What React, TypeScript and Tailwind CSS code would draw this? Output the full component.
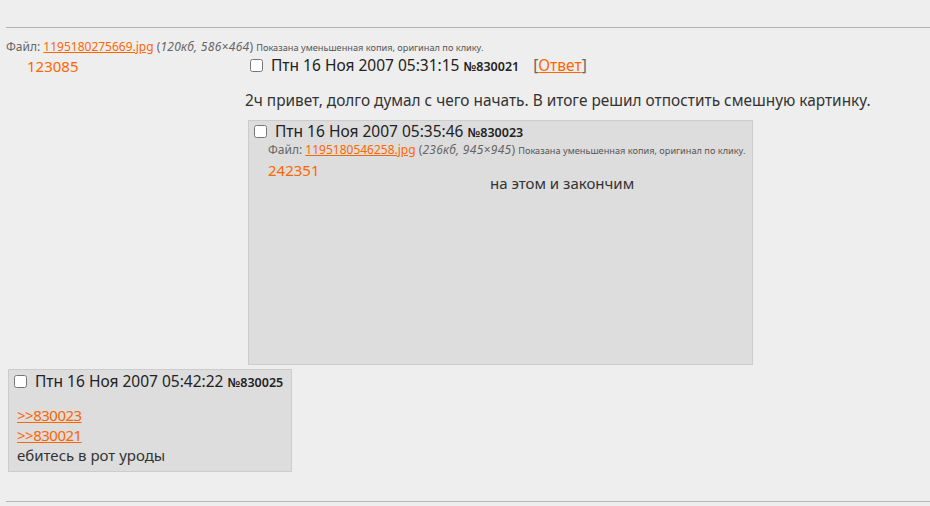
const font = "font-['Trebuchet_MS','Noto_Sans',sans-serif]";

function Box() {
  return <input type="checkbox" className="m-0 h-[13px] w-[13px] shrink-0" />;
}

function FileLine({ name, size, dims }: { name: string; size: string; dims: string }) {
  return (
    <div className="text-[12px] leading-[14px] text-[#666]">
      Файл:{" "}
      <a href="#" className="text-[#ff6600] underline">
        {name}
      </a>{" "}
      (<em className="tracking-[0.3px]">
        {size}, {dims}
      </em>
      ) <span className="text-[9.2px] text-[#555]">Показана уменьшенная копия, оригинал по клику.</span>
    </div>
  );
}

function Header({ date, num, reply }: { date: string; num: string; reply?: boolean }) {
  return (
    <div className="flex h-[18px] items-center gap-[8px] text-[15.5px] leading-[18px] text-[#222]">
      <Box />
      <span className="leading-[18px]">
        {date} <span className="text-[12.5px] leading-none font-semibold">№{num}</span>
      </span>
      {reply && (
        <span className="ml-[6px] text-[#666]">
          [<a href="#" className="text-[#ff6600] underline">Ответ</a>]
        </span>
      )}
    </div>
  );
}

export default function App() {
  return (
    <div className={`min-h-screen bg-[#eeeeee] pt-[27px] ${font}`}>
      <hr className="ml-[6px] border-0 border-t border-[#b4b4b4]" />
      <div className="pl-[6px] pt-[12px]">
        <FileLine name="1195180275669.jpg" size="120кб" dims="586×464" />
        <div className="mt-[1px] flex">
          <div className="w-[241px] shrink-0 pl-[21px] pt-[1px] text-[15px] leading-[18px] text-[#ff6600]">123085</div>
          <div className="flex flex-col">
            <div className="pl-[3px]">
              <Header date="Птн 16 Ноя 2007 05:31:15" num="830021" reply />
            </div>
            <p className="-ml-[2px] mt-[17px] text-[15.4px] leading-[20px] text-[#333]">
              2ч привет, долго думал с чего начать. В итоге решил отпостить смешную картинку.
            </p>
            <div className="ml-[1px] mt-[9px] flex h-[245px] w-[505px] flex-col border border-[#cccccc] bg-[#dddddd] pl-[5px] pt-[1px]">
              <Header date="Птн 16 Ноя 2007 05:35:46" num="830023" />
              <div className="pl-[14px] pt-[3px]">
                <FileLine name="1195180546258.jpg" size="236кб" dims="945×945" />
              </div>
              <div className="flex">
                <div className="w-[236px] shrink-0 pl-[14px] pt-[3px] text-[15px] leading-[18px] text-[#ff6600]">242351</div>
                <p className="pt-[15px] text-[15px] leading-[20px] text-[#333]">на этом и закончим</p>
              </div>
            </div>
          </div>
        </div>
        <div className="ml-[2px] mt-[4px] w-[284px] border border-[#cccccc] bg-[#dddddd] pb-[6px] pl-[5px] pt-[2px]">
          <Header date="Птн 16 Ноя 2007 05:42:22" num="830025" />
          <div className="pl-[3px] pt-[15px] text-[15px] leading-[20px] text-[#333]">
            <a href="#" className="block w-fit tracking-[-0.5px] text-[#ff6600] underline">
              &gt;&gt;830023
            </a>
            <a href="#" className="block w-fit tracking-[-0.5px] text-[#ff6600] underline">
              &gt;&gt;830021
            </a>
            <div>ебитесь в рот уроды</div>
          </div>
        </div>
      </div>
      <hr className="ml-[6px] mt-[29px] border-0 border-t border-[#b4b4b4]" />
    </div>
  );
}
